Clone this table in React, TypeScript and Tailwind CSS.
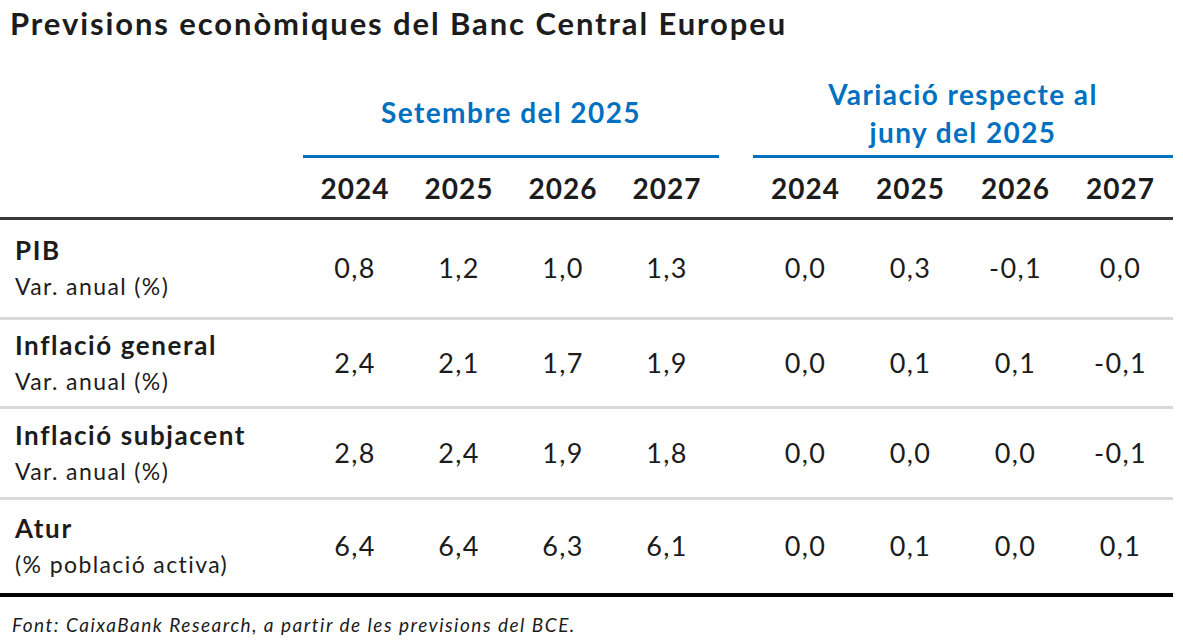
const cols = "grid grid-cols-[303px_repeat(4,104px)_34px_repeat(4,105px)]";

const rows = [
  { label: "PIB", sub: "Var. anual (%)", a: ["0,8", "1,2", "1,0", "1,3"], b: ["0,0", "0,3", "-0,1", "0,0"], h: "h-[100px]", border: "border-b-[3px] border-[#d9d9d9]" },
  { label: "Inflació general", sub: "Var. anual (%)", a: ["2,4", "2,1", "1,7", "1,9"], b: ["0,0", "0,1", "0,1", "-0,1"], h: "h-[89px]", border: "border-b-[3px] border-[#d9d9d9]" },
  { label: "Inflació subjacent", sub: "Var. anual (%)", a: ["2,8", "2,4", "1,9", "1,8"], b: ["0,0", "0,0", "0,0", "-0,1"], h: "h-[91px]", border: "border-b-[3px] border-[#d9d9d9]" },
  { label: "Atur", sub: "(% població activa)", a: ["6,4", "6,4", "6,3", "6,1"], b: ["0,0", "0,1", "0,0", "0,1"], h: "h-[97px]", border: "border-b-4 border-black" },
];

const years = ["2024", "2025", "2026", "2027"];

export default function App() {
  return (
    <div className="w-[1183px] h-[642px] bg-white text-[#1c1c1c] font-['Lato','Open_Sans',sans-serif]">
      {/* Title */}
      <h1 className="pl-[10px] pt-[5px] h-[70px] text-[31px] leading-[36px] font-bold tracking-[1.9px]">
        Previsions econòmiques del Banc Central Europeu
      </h1>

      <div className="w-[1173px]">
        {/* Group headers */}
        <div className={`${cols} h-[88px]`}>
          <div />
          <div className="col-span-4 flex items-center justify-center border-b-[3px] border-[#0070c0] text-[#0070c0] text-[28px] leading-[37px] font-bold tracking-[1.4px]">
            Setembre del 2025
          </div>
          <div />
          <div className="col-span-4 flex items-center justify-center border-b-[3px] border-[#0070c0] text-[#0070c0] text-[28px] leading-[38px] font-bold tracking-[1.4px] text-center">
            Variació respecte al
            <br />
            juny del 2025
          </div>
        </div>

        {/* Years */}
        <div className={`${cols} h-[62px] border-b-[3px] border-[#3a3a3a] items-center text-[28px] font-bold tracking-[1px]`}>
          <div />
          {years.map((y) => (
            <div key={"a" + y} className="text-center">{y}</div>
          ))}
          <div />
          {years.map((y) => (
            <div key={"b" + y} className="text-center">{y}</div>
          ))}
        </div>

        {/* Data rows */}
        {rows.map((r) => (
          <div key={r.label} className={`${cols} ${r.h} ${r.border} items-center text-[27px] tracking-[1.4px]`}>
            <div className="pl-[15px] flex flex-col">
              <span className="text-[26px] leading-[36px] font-bold tracking-[1.6px]">{r.label}</span>
              <span className="text-[23px] leading-[37px] tracking-[1.4px]">{r.sub}</span>
            </div>
            {r.a.map((v, i) => (
              <div key={"a" + i} className="text-center">{v}</div>
            ))}
            <div />
            {r.b.map((v, i) => (
              <div key={"b" + i} className="text-center">{v}</div>
            ))}
          </div>
        ))}
      </div>

      {/* Footnote */}
      <p className="pl-[12px] pt-[14px] text-[19px] italic tracking-[1.5px]">
        Font: CaixaBank Research, a partir de les previsions del BCE.
      </p>
    </div>
  );
}
